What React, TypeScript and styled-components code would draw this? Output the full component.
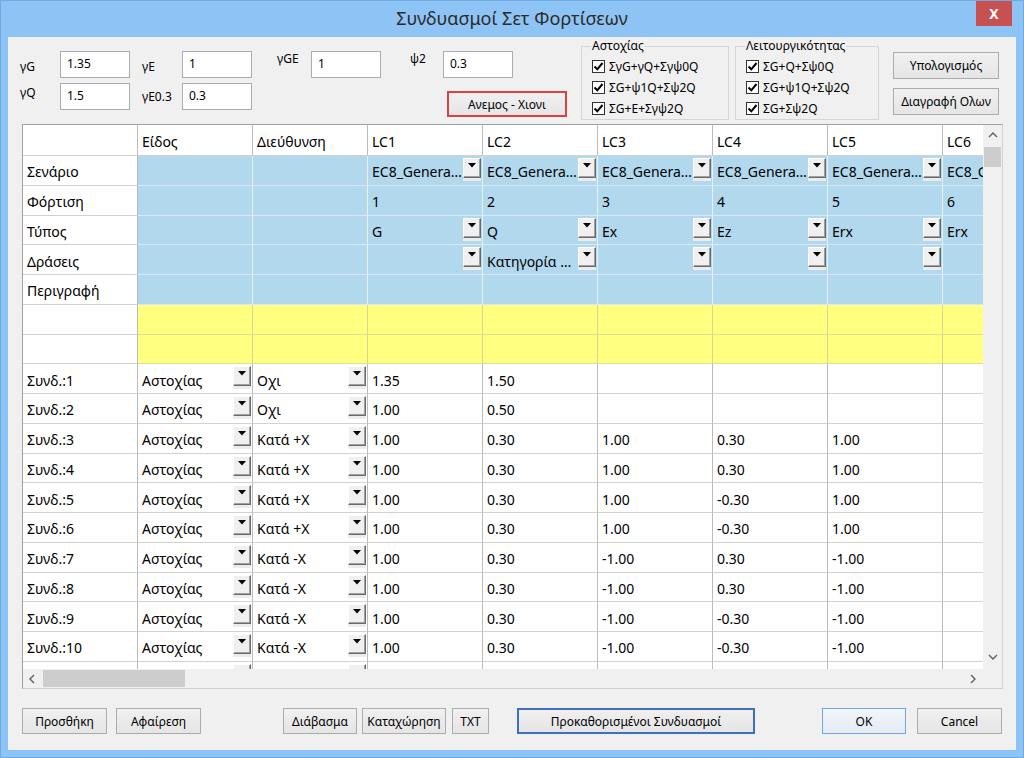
import React from 'react';
import styled, { createGlobalStyle } from 'styled-components';

const GlobalStyle = createGlobalStyle`
  html, body { margin: 0; padding: 0; background: #8ec4f5; }
  body { font-family: "Noto Sans", "Liberation Sans", sans-serif; color: #000; }
  #root { width: 1024px; height: 758px; }
  * { box-sizing: border-box; }
`;

const Window = styled.div`
  width: 1024px;
  height: 758px;
  background: #8ec4f5;
  border: 1px solid #6ea9e2;
  display: flex;
  flex-direction: column;
`;

const TitleBar = styled.div`
  height: 36px;
  flex: none;
  display: grid;
  grid-template-columns: 1fr auto 1fr;
  align-items: start;
`;

const TitleText = styled.div`
  grid-column: 2;
  font-size: 18px;
  line-height: 34px;
  color: #2b2b2b;
  white-space: nowrap;
`;

const CloseButton = styled.div`
  grid-column: 3;
  justify-self: end;
  margin-right: 11px;
  width: 36px;
  height: 25px;
  background: #c75050;
  color: #fff;
  font-size: 14px;
  font-weight: 700;
  display: flex;
  align-items: center;
  justify-content: center;
`;

const Client = styled.div`
  flex: 1;
  margin: 0 7px 7px 7px;
  background: #f0f0f0;
  display: flex;
  flex-direction: column;
`;

const TopArea = styled.div`
  height: 87px;
  flex: none;
  display: flex;
  align-items: flex-start;
  padding-left: 12px;
`;

const ParamGrid = styled.div`
  width: 561px;
  margin-top: 14px;
  display: grid;
  grid-template-columns: 122px 135px 133px 1fr;
  grid-template-rows: 27px 27px;
  row-gap: 5px;
`;

const Field = styled.div`
  display: flex;
  align-items: flex-start;
`;

const ParamLabel = styled.div<{ $w: number; $dy: number }>`
  width: ${(p) => p.$w}px;
  margin-top: ${(p) => p.$dy}px;
  font-size: 12px;
  line-height: 16px;
  white-space: nowrap;
`;

const ParamInput = styled.input`
  width: 70px;
  height: 27px;
  border: 1px solid #abadb3;
  background: #fff;
  font-family: inherit;
  font-size: 12px;
  padding: 0 6px 3px 6px;
  color: #000;
  outline: none;
`;

const WinButton = styled.div<{ $w: number; $h?: number }>`
  width: ${(p) => p.$w}px;
  height: ${(p) => p.$h ?? 26}px;
  flex: none;
  border: 1px solid #acacac;
  background: linear-gradient(#f0f0f0, #e5e5e5);
  font-size: 12px;
  display: flex;
  align-items: center;
  justify-content: center;
  white-space: nowrap;
`;

const WindButton = styled(WinButton)`
  grid-column: 4;
  grid-row: 2;
  margin-left: 37px;
  margin-top: 8px;
  border: 2px solid #dc4040;
`;

const DefaultButton = styled(WinButton)`
  border: 2px solid #3f6fc0;
`;

const OkButton = styled(WinButton)`
  border: 1px solid #6fa6e0;
  background: linear-gradient(#f2f6fb, #e5ebf2);
`;

const Group = styled.fieldset<{ $w: number; $ml: number }>`
  width: ${(p) => p.$w}px;
  height: 81px;
  margin: 2px 0 0 ${(p) => p.$ml}px;
  padding: 0 0 0 9px;
  border: 1px solid #d5d5d5;
  min-width: 0;
`;

const Legend = styled.legend`
  font-size: 12px;
  line-height: 14px;
  padding: 0 1px;
`;

const CheckList = styled.div`
  display: flex;
  flex-direction: column;
  padding-top: 3px;
`;

const CheckItem = styled.div`
  height: 21px;
  display: flex;
  align-items: center;
  font-size: 12px;
  white-space: nowrap;
`;

const CheckBox = styled.span`
  width: 13px;
  height: 13px;
  border: 1px solid #333;
  background: #fff;
  margin: 0 4px 0 1px;
  display: flex;
  align-items: center;
  justify-content: center;
`;

const RightButtons = styled.div`
  margin: 15px 0 0 14px;
  display: flex;
  flex-direction: column;
  gap: 9px;
`;

const GridFrame = styled.div`
  margin: 0 13px 0 14px;
  height: 565px;
  flex: none;
  border: 1px solid #a0a0a0;
  border-right-color: #d0d0d0;
  border-bottom-color: #d0d0d0;
  display: grid;
  grid-template-columns: 1fr 19px;
  grid-template-rows: 1fr 19px;
  background: #fff;
  overflow: hidden;
`;

const Viewport = styled.div`
  overflow: hidden;
  background: #fff;
`;

const Table = styled.div`
  display: grid;
  grid-template-columns: repeat(9, 115px);
  grid-template-rows: 31px;
  grid-auto-rows: 29.75px;
  width: max-content;
`;

type Tone = 'white' | 'blue' | 'yellow';

const toneBg: Record<Tone, string> = { white: '#ffffff', blue: '#b1d8ec', yellow: '#ffff80' };
const toneRight: Record<Tone, string> = { white: '#bcbcbc', blue: '#e6f1f8', yellow: '#d6d690' };
const toneBottom: Record<Tone, string> = { white: '#d2d2d2', blue: '#d6e8f3', yellow: '#dede98' };

const Cell = styled.div<{ $tone: Tone }>`
  background: ${(p) => toneBg[p.$tone]};
  border-right: 1px solid ${(p) => toneRight[p.$tone]};
  border-bottom: 1px solid ${(p) => toneBottom[p.$tone]};
  display: flex;
  align-items: center;
  padding: 3px 0 0 4px;
  font-size: 14px;
  white-space: nowrap;
  overflow: hidden;
`;

const CellText = styled.span`
  flex: 1;
  overflow: hidden;
`;

const DropWrap = styled.span`
  align-self: flex-start;
  margin: -1px 1px 0 0;
  width: 18px;
  height: 23px;
  flex: none;
  background: #ececec;
`;

const DropButton = styled.span`
  display: flex;
  align-items: center;
  justify-content: center;
  width: 18px;
  height: 20px;
  background: #f0f0f0;
  border-top: 1px solid #fff;
  border-left: 1px solid #fff;
  border-right: 1px solid #6a6a6a;
  border-bottom: 1px solid #6a6a6a;
  box-shadow: inset -1px -1px 0 #a0a0a0;
  padding-bottom: 5px;
`;

const VScroll = styled.div`
  background: #f0f0f0;
  display: flex;
  flex-direction: column;
  align-items: center;
`;

const HScroll = styled.div`
  background: #f0f0f0;
  display: flex;
  align-items: center;
`;

const ArrowBox = styled.div<{ $size: number }>`
  width: ${(p) => p.$size}px;
  height: ${(p) => p.$size}px;
  flex: none;
  display: flex;
  align-items: center;
  justify-content: center;
`;

const VThumb = styled.div`
  width: 17px;
  height: 20px;
  background: #cdcdcd;
  flex: none;
`;

const HThumb = styled.div`
  width: 142px;
  height: 17px;
  background: #cdcdcd;
  flex: none;
`;

const Fill = styled.div`
  flex: 1;
`;

const Corner = styled.div`
  background: #f0f0f0;
`;

const BottomBar = styled.div`
  margin-top: 19px;
  padding-left: 14px;
  display: flex;
  align-items: flex-start;
`;

const Gap = styled.div<{ $w: number }>`
  width: ${(p) => p.$w}px;
  flex: none;
`;

const Chevron = ({ dir }: { dir: 'up' | 'down' | 'left' | 'right' }) => {
  const paths: Record<string, string> = {
    up: 'M1 6 L5 2 L9 6',
    down: 'M1 2 L5 6 L9 2',
    left: 'M6 1 L2 5 L6 9',
    right: 'M3 1 L7 5 L3 9',
  };
  return (
    <svg width="10" height="10" viewBox="0 0 10 10">
      <path d={paths[dir]} fill="none" stroke="#606060" strokeWidth="1.4" />
    </svg>
  );
};

const CheckMark = () => (
  <svg width="11" height="11" viewBox="0 0 11 11">
    <path d="M1.5 5.5 L4.3 8.3 L9.5 2" fill="none" stroke="#000" strokeWidth="2" />
  </svg>
);

const Dropdown = () => (
  <DropWrap>
    <DropButton>
      <svg width="8" height="5" viewBox="0 0 8 5">
        <path d="M0 0 H8 L4 4.5 Z" fill="#000" />
      </svg>
    </DropButton>
  </DropWrap>
);

type CellData = { text?: string; dd?: boolean; tone: Tone };

const GridCell = ({ c }: { c: CellData }) => (
  <Cell $tone={c.tone}>
    <CellText>{c.text ?? ''}</CellText>
    {c.dd && <Dropdown />}
  </Cell>
);

const lcs = ['LC1', 'LC2', 'LC3', 'LC4', 'LC5', 'LC6'];

const buildRows = (): CellData[][] => {
  const rows: CellData[][] = [];
  rows.push([
    { tone: 'white' },
    { text: 'Είδος', tone: 'white' },
    { text: 'Διεύθυνση', tone: 'white' },
    ...lcs.map((t) => ({ text: t, tone: 'white' as Tone })),
  ]);
  const blueRow = (label: string, vals: string[], dd: boolean): CellData[] => [
    { text: label, tone: 'white' },
    { tone: 'blue' },
    { tone: 'blue' },
    ...vals.map((v) => ({ text: v, dd, tone: 'blue' as Tone })),
  ];
  const gen = 'EC8_Genera…';
  rows.push(blueRow('Σενάριο', [gen, gen, gen, gen, gen, gen], true));
  rows.push(blueRow('Φόρτιση', ['1', '2', '3', '4', '5', '6'], false));
  rows.push(blueRow('Τύπος', ['G', 'Q', 'Ex', 'Ez', 'Erx', 'Erx'], true));
  rows.push(blueRow('Δράσεις', ['', 'Κατηγορία …', '', '', '', ''], true));
  rows.push(blueRow('Περιγραφή', ['', '', '', '', '', ''], false));
  for (let i = 0; i < 2; i++) {
    rows.push([{ tone: 'white' }, ...Array.from({ length: 8 }, () => ({ tone: 'yellow' as Tone }))]);
  }
  const data: [string, string[]][] = [
    ['Οχι', ['1.35', '1.50', '', '', '', '']],
    ['Οχι', ['1.00', '0.50', '', '', '', '']],
    ['Κατά +X', ['1.00', '0.30', '1.00', '0.30', '1.00', '']],
    ['Κατά +X', ['1.00', '0.30', '1.00', '0.30', '1.00', '']],
    ['Κατά +X', ['1.00', '0.30', '1.00', '-0.30', '1.00', '']],
    ['Κατά +X', ['1.00', '0.30', '1.00', '-0.30', '1.00', '']],
    ['Κατά -X', ['1.00', '0.30', '-1.00', '0.30', '-1.00', '']],
    ['Κατά -X', ['1.00', '0.30', '-1.00', '0.30', '-1.00', '']],
    ['Κατά -X', ['1.00', '0.30', '-1.00', '-0.30', '-1.00', '']],
    ['Κατά -X', ['1.00', '0.30', '-1.00', '-0.30', '-1.00', '']],
    ['Κατά +Z', ['1.00', '0.30', '0.30', '1.00', '0.30', '']],
  ];
  data.forEach(([dir, vals], i) => {
    rows.push([
      { text: `Συνδ.:${i + 1}`, tone: 'white' },
      { text: 'Αστοχίας', dd: true, tone: 'white' },
      { text: dir, dd: true, tone: 'white' },
      ...vals.map((v) => ({ text: v, tone: 'white' as Tone })),
    ]);
  });
  return rows;
};

const rows = buildRows();

const params = [
  { label: 'γG', w: 40, dy: 8, value: '1.35', col: 1, row: 1 },
  { label: 'γQ', w: 40, dy: 2, value: '1.5', col: 1, row: 2 },
  { label: 'γE', w: 40, dy: 8, value: '1', col: 2, row: 1 },
  { label: 'γE0.3', w: 40, dy: 6, value: '0.3', col: 2, row: 2 },
  { label: 'γGE', w: 34, dy: 0, value: '1', col: 3, row: 1 },
  { label: 'ψ2', w: 33, dy: 0, value: '0.3', col: 4, row: 1 },
];

const ParamCell = styled(Field)<{ $col: number; $row: number }>`
  grid-column: ${(p) => p.$col};
  grid-row: ${(p) => p.$row};
`;

export default function App() {
  return (
    <>
      <GlobalStyle />
      <Window>
        <TitleBar>
          <TitleText>Συνδυασμοί Σετ Φορτίσεων</TitleText>
          <CloseButton>X</CloseButton>
        </TitleBar>
        <Client>
          <TopArea>
            <ParamGrid>
              {params.map((p) => (
                <ParamCell key={p.label} $col={p.col} $row={p.row}>
                  <ParamLabel $w={p.w} $dy={p.dy}>{p.label}</ParamLabel>
                  <ParamInput readOnly value={p.value} />
                </ParamCell>
              ))}
              <WindButton $w={120}>Ανεμος - Χιονι</WindButton>
            </ParamGrid>
            <Group $w={148} $ml={0}>
              <Legend>Αστοχίας</Legend>
              <CheckList>
                {['ΣγG+γQ+Σγψ0Q', 'ΣG+ψ1Q+Σψ2Q', 'ΣG+E+Σγψ2Q'].map((t) => (
                  <CheckItem key={t}>
                    <CheckBox><CheckMark /></CheckBox>
                    {t}
                  </CheckItem>
                ))}
              </CheckList>
            </Group>
            <Group $w={144} $ml={6}>
              <Legend>Λειτουργικότητας</Legend>
              <CheckList>
                {['ΣG+Q+Σψ0Q', 'ΣG+ψ1Q+Σψ2Q', 'ΣG+Σψ2Q'].map((t) => (
                  <CheckItem key={t}>
                    <CheckBox><CheckMark /></CheckBox>
                    {t}
                  </CheckItem>
                ))}
              </CheckList>
            </Group>
            <RightButtons>
              <WinButton $w={106} $h={27}>Υπολογισμός</WinButton>
              <WinButton $w={106} $h={27}>Διαγραφή Ολων</WinButton>
            </RightButtons>
          </TopArea>
          <GridFrame>
            <Viewport>
              <Table>
                {rows.map((r, ri) =>
                  r.map((c, ci) => <GridCell key={`${ri}-${ci}`} c={c} />)
                )}
              </Table>
            </Viewport>
            <VScroll>
              <ArrowBox $size={22}><Chevron dir="up" /></ArrowBox>
              <VThumb />
              <Fill />
              <ArrowBox $size={22}><Chevron dir="down" /></ArrowBox>
            </VScroll>
            <HScroll>
              <ArrowBox $size={20}><Chevron dir="left" /></ArrowBox>
              <HThumb />
              <Fill />
              <ArrowBox $size={20}><Chevron dir="right" /></ArrowBox>
            </HScroll>
            <Corner />
          </GridFrame>
          <BottomBar>
            <WinButton $w={85}>Προσθήκη</WinButton>
            <Gap $w={9} />
            <WinButton $w={85}>Αφαίρεση</WinButton>
            <Gap $w={82} />
            <WinButton $w={74}>Διάβασμα</WinButton>
            <Gap $w={5} />
            <WinButton $w={84}>Καταχώρηση</WinButton>
            <Gap $w={6} />
            <WinButton $w={37}>TXT</WinButton>
            <Gap $w={28} />
            <DefaultButton $w={238}>Προκαθορισμένοι Συνδυασμοί</DefaultButton>
            <Gap $w={67} />
            <OkButton $w={84}>OK</OkButton>
            <Gap $w={11} />
            <WinButton $w={85}>Cancel</WinButton>
          </BottomBar>
        </Client>
      </Window>
    </>
  );
}
